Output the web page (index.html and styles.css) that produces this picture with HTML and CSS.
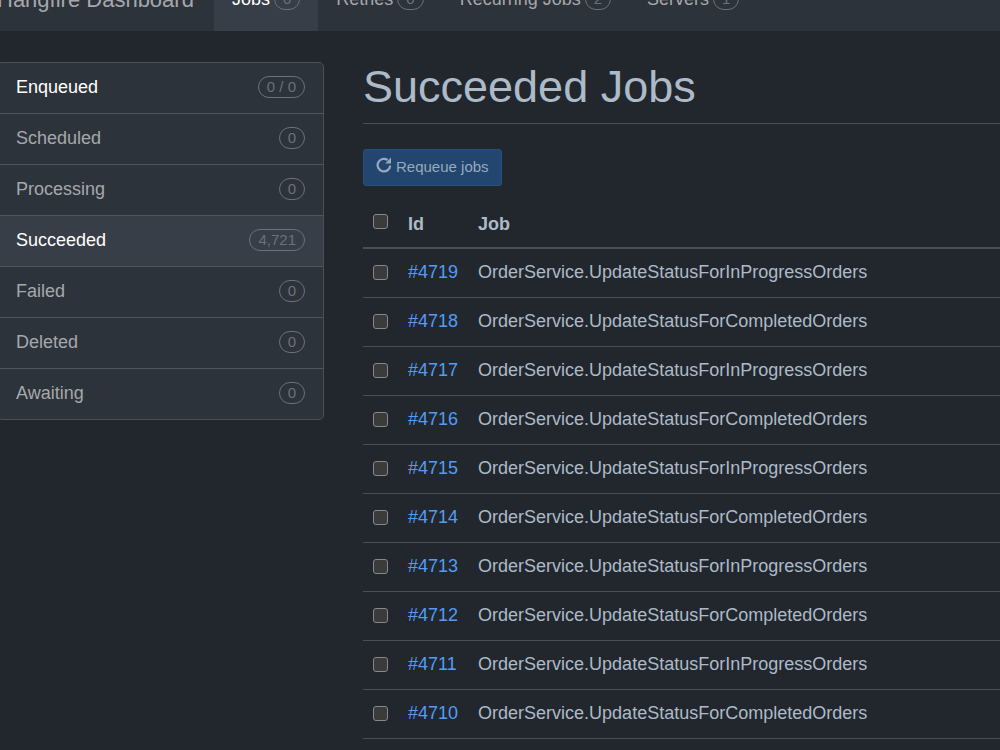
FILE: index.html
```html
<!DOCTYPE html>
<html lang="en">
<head>
    <meta charset="UTF-8">
    <meta name="viewport" content="width=device-width, initial-scale=1.0">
    <title>Succeeded Jobs - Hangfire Dashboard</title>
    <link rel="stylesheet" href="styles.css">
</head>
<body>
    <nav class="navbar">
        <a class="brand" href="#">Hangfire Dashboard</a>
        <a class="nav-link active" href="#">Jobs <span class="badge">0</span></a>
        <a class="nav-link" href="#">Retries <span class="badge">0</span></a>
        <a class="nav-link" href="#">Recurring Jobs <span class="badge">2</span></a>
        <a class="nav-link" href="#">Servers <span class="badge">1</span></a>
    </nav>
    <div class="container">
        <aside class="sidebar">
            <a class="item highlighted" href="#">Enqueued <span class="badge">0 / 0</span></a>
            <a class="item" href="#">Scheduled <span class="badge">0</span></a>
            <a class="item" href="#">Processing <span class="badge">0</span></a>
            <a class="item active" href="#">Succeeded <span class="badge">4,721</span></a>
            <a class="item" href="#">Failed <span class="badge">0</span></a>
            <a class="item" href="#">Deleted <span class="badge">0</span></a>
            <a class="item" href="#">Awaiting <span class="badge">0</span></a>
        </aside>
        <main class="content">
            <h1>Succeeded Jobs</h1>
            <button class="btn" type="button" disabled>
                <svg class="icon" viewBox="0 0 16 16" aria-hidden="true">
                    <path d="M11.6 3A6.3 6.3 0 1 0 14.2 8.6" fill="none" stroke="currentColor" stroke-width="2.2"/>
                    <path d="M15 0.6V6.4H9.2Z" fill="currentColor"/>
                </svg>
                Requeue jobs
            </button>
            <table class="jobs">
                <thead>
                    <tr>
                        <th class="check"><input type="checkbox" aria-label="Select all jobs"></th>
                        <th class="id">Id</th>
                        <th>Job</th>
                    </tr>
                </thead>
                <tbody id="job-list"></tbody>
            </table>
        </main>
    </div>

    <script>
        const jobList = document.getElementById('job-list');

        for (let id = 4719; id >= 4710; id--) {
            const state = id % 2 ? 'InProgress' : 'Completed';
            jobList.innerHTML += `
                <tr>
                    <td class="check"><input type="checkbox" aria-label="Select job #${id}"></td>
                    <td class="id"><a href="#">#${id}</a></td>
                    <td>OrderService.UpdateStatusFor${state}Orders</td>
                </tr>
            `;
        }
    </script>
</body>
</html>
```

FILE: styles.css
```css
* {
    box-sizing: border-box;
}
body {
    margin: 0;
    overflow: hidden;
    background-color: #22272e;
    color: #adbac7;
    font-family: "Liberation Sans", Arial, sans-serif;
    font-size: 18px;
    line-height: 26px;
}
a {
    color: #539bf5;
    text-decoration: none;
}
.navbar {
    display: flex;
    height: 64px;
    margin-top: -33px;
    margin-left: -3px;
    background-color: #2d333b;
}
.brand {
    padding: 20px 20px 18px 0;
    color: #a5a8ab;
    font-size: 22px;
    white-space: nowrap;
}
.nav-link {
    display: flex;
    align-items: center;
    gap: 4px;
    padding: 0 18px;
    color: #a5a8ab;
    white-space: nowrap;
}
.nav-link.active {
    background-color: #373e47;
    color: #fff;
}
.badge {
    padding: 0 8px;
    border: 1px solid #6b7179;
    border-radius: 11px;
    color: #6b7179;
    font-size: 15px;
    line-height: 20px;
}
.container {
    display: grid;
    grid-template-columns: 327px minmax(0, 1fr);
    gap: 39px;
    align-items: start;
    margin-left: -3px;
    padding-top: 31px;
}
.sidebar {
    border: 1px solid #4b5056;
    border-radius: 5px;
    background-color: #2d333b;
    overflow: hidden;
}
.item {
    display: flex;
    align-items: center;
    justify-content: space-between;
    padding: 11px 18px 13px;
    color: #a5a8ab;
}
.item + .item {
    border-top: 1px solid #50555a;
}
.item.active {
    background-color: #373e47;
}
.item.highlighted,
.item.active {
    color: #fff;
}
h1 {
    margin: 0 0 25px;
    padding-bottom: 11px;
    border-bottom: 1px solid #4a4f54;
    font-size: 45px;
    font-weight: normal;
    line-height: 50px;
}
.btn {
    display: flex;
    align-items: flex-start;
    gap: 4px;
    padding: 6px 12px 8px;
    border: 1px solid #26507f;
    border-radius: 3px;
    background-color: #22466f;
    color: #99a9ba;
    font-family: inherit;
    font-size: 15px;
    line-height: 21px;
}
.icon {
    width: 16px;
    height: 16px;
    margin-top: 1px;
}
.jobs {
    width: 100%;
    margin-top: 13px;
    border-collapse: separate;
    border-spacing: 0;
}
.jobs th,
.jobs td {
    padding: 10px 10px 12px;
    border-bottom: 1px solid #4a4f54;
    text-align: left;
    vertical-align: top;
}
.jobs th {
    padding: 12px 10px 10px;
    border-bottom-width: 2px;
}
.jobs .check {
    width: 35px;
}
.jobs .id {
    width: 70px;
}
.jobs input {
    display: block;
    appearance: none;
    width: 15px;
    height: 15px;
    margin: 6px 0 0;
    border: 1px solid #85878a;
    border-radius: 3px;
    background-color: #3b3b3b;
}
.jobs th input {
    margin-top: 3px;
}
```
